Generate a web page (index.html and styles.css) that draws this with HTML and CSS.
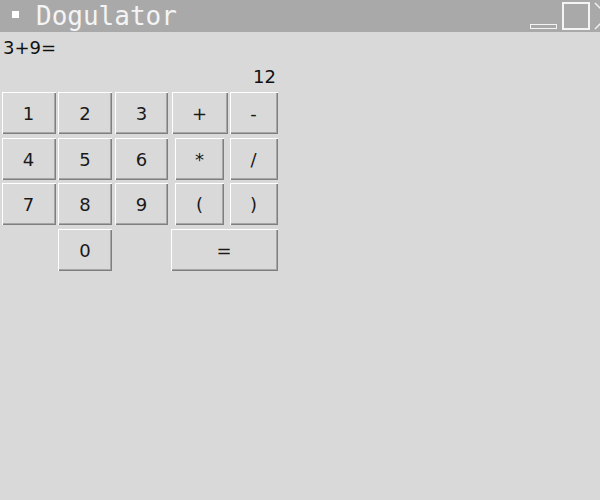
FILE: index.html
```html
<!DOCTYPE html>
<html>
<head>
<meta charset="utf-8">
<title>Dogulator</title>
<link rel="stylesheet" href="styles.css">
</head>
<body>
<div class="titlebar">
  <span class="app-icon"></span>
  <span class="title">Dogulator</span>
  <span class="ctl-min"></span>
  <span class="ctl-max"></span>
  <svg class="ctl-close" width="6" height="28" viewBox="0 0 6 28"><path d="M1 1 L28 28 M1 27 L28 0" stroke="#f4f4f4" stroke-width="1.4" fill="none"/></svg>
</div>
<div class="calc">
  <div class="expr">3+9=</div>
  <div class="result">12</div>
  <div class="keys">
    <button class="key k1">1</button>
    <button class="key k2">2</button>
    <button class="key k3">3</button>
    <button class="key kop-wide">+</button>
    <button class="key k5">-</button>

    <button class="key k1">4</button>
    <button class="key k2">5</button>
    <button class="key k3">6</button>
    <button class="key kop">*</button>
    <button class="key k5">/</button>

    <button class="key k1">7</button>
    <button class="key k2">8</button>
    <button class="key k3">9</button>
    <button class="key kop">(</button>
    <button class="key k5">)</button>

    <span class="empty"></span>
    <button class="key k2">0</button>
    <span class="empty"></span>
    <button class="key keq">=</button>
  </div>
</div>
</body>
</html>
```
FILE: styles.css
```css
html, body {
  margin: 0;
  padding: 0;
  background: #d9d9d9;
  width: 600px;
  height: 500px;
  overflow: hidden;
  font-family: "DejaVu Sans", sans-serif;
}
.titlebar {
  height: 32px;
  background: #a9a9a9;
  display: flex;
  align-items: flex-start;
  overflow: hidden;
}
.app-icon {
  width: 7px;
  height: 7px;
  background: #fff;
  margin: 11px 0 0 12px;
  flex: none;
}
.title {
  flex: 1;
  margin-left: 17px;
  font-family: "DejaVu Sans Mono", monospace;
  font-size: 26px;
  line-height: 32px;
  color: #f4f4f4;
  white-space: nowrap;
}
.ctl-min {
  flex: none;
  width: 27px;
  height: 5px;
  margin-top: 24px;
  border: 1px solid #f4f4f4;
  box-sizing: border-box;
}
.ctl-max {
  flex: none;
  width: 28px;
  height: 28px;
  margin: 2px 0 0 5px;
  border: 2px solid #f4f4f4;
  box-sizing: border-box;
}
.ctl-close {
  flex: none;
  margin: 2px 0 0 4px;
  display: block;
}
.calc {
  width: 280px;
  color: #111;
  font-size: 18px;
}
.expr {
  padding: 5px 0 0 3px;
  line-height: 21px;
  height: 21px;
}
.result {
  margin-top: 8px;
  width: 276px;
  text-align: right;
  line-height: 21px;
  height: 21px;
}
.keys {
  margin-top: 5px;
  display: grid;
  grid-template-columns: 57px 56px 57px 59px 49px;
  grid-template-rows: 46px 45px 46px 42px;
  align-items: start;
}
.key {
  font-family: "DejaVu Sans", sans-serif;
  font-size: 18px;
  color: #1a1a1a;
  background: #d9d9d9;
  border: none;
  margin: 0;
  padding: 0;
  height: 42px;
  justify-self: center;
  box-shadow: inset 1px 1px #ffffff, inset -1px -1px #7f7f7f, inset -2px -2px #a6a6a6;
}
.k1 { width: 54px; }
.k2 { width: 54px; }
.k3 { width: 53px; }
.kop-wide { width: 56px; }
.kop { width: 49px; }
.k5 { width: 48px; }
.keq {
  grid-column: span 2;
  width: 107px;
}
```
